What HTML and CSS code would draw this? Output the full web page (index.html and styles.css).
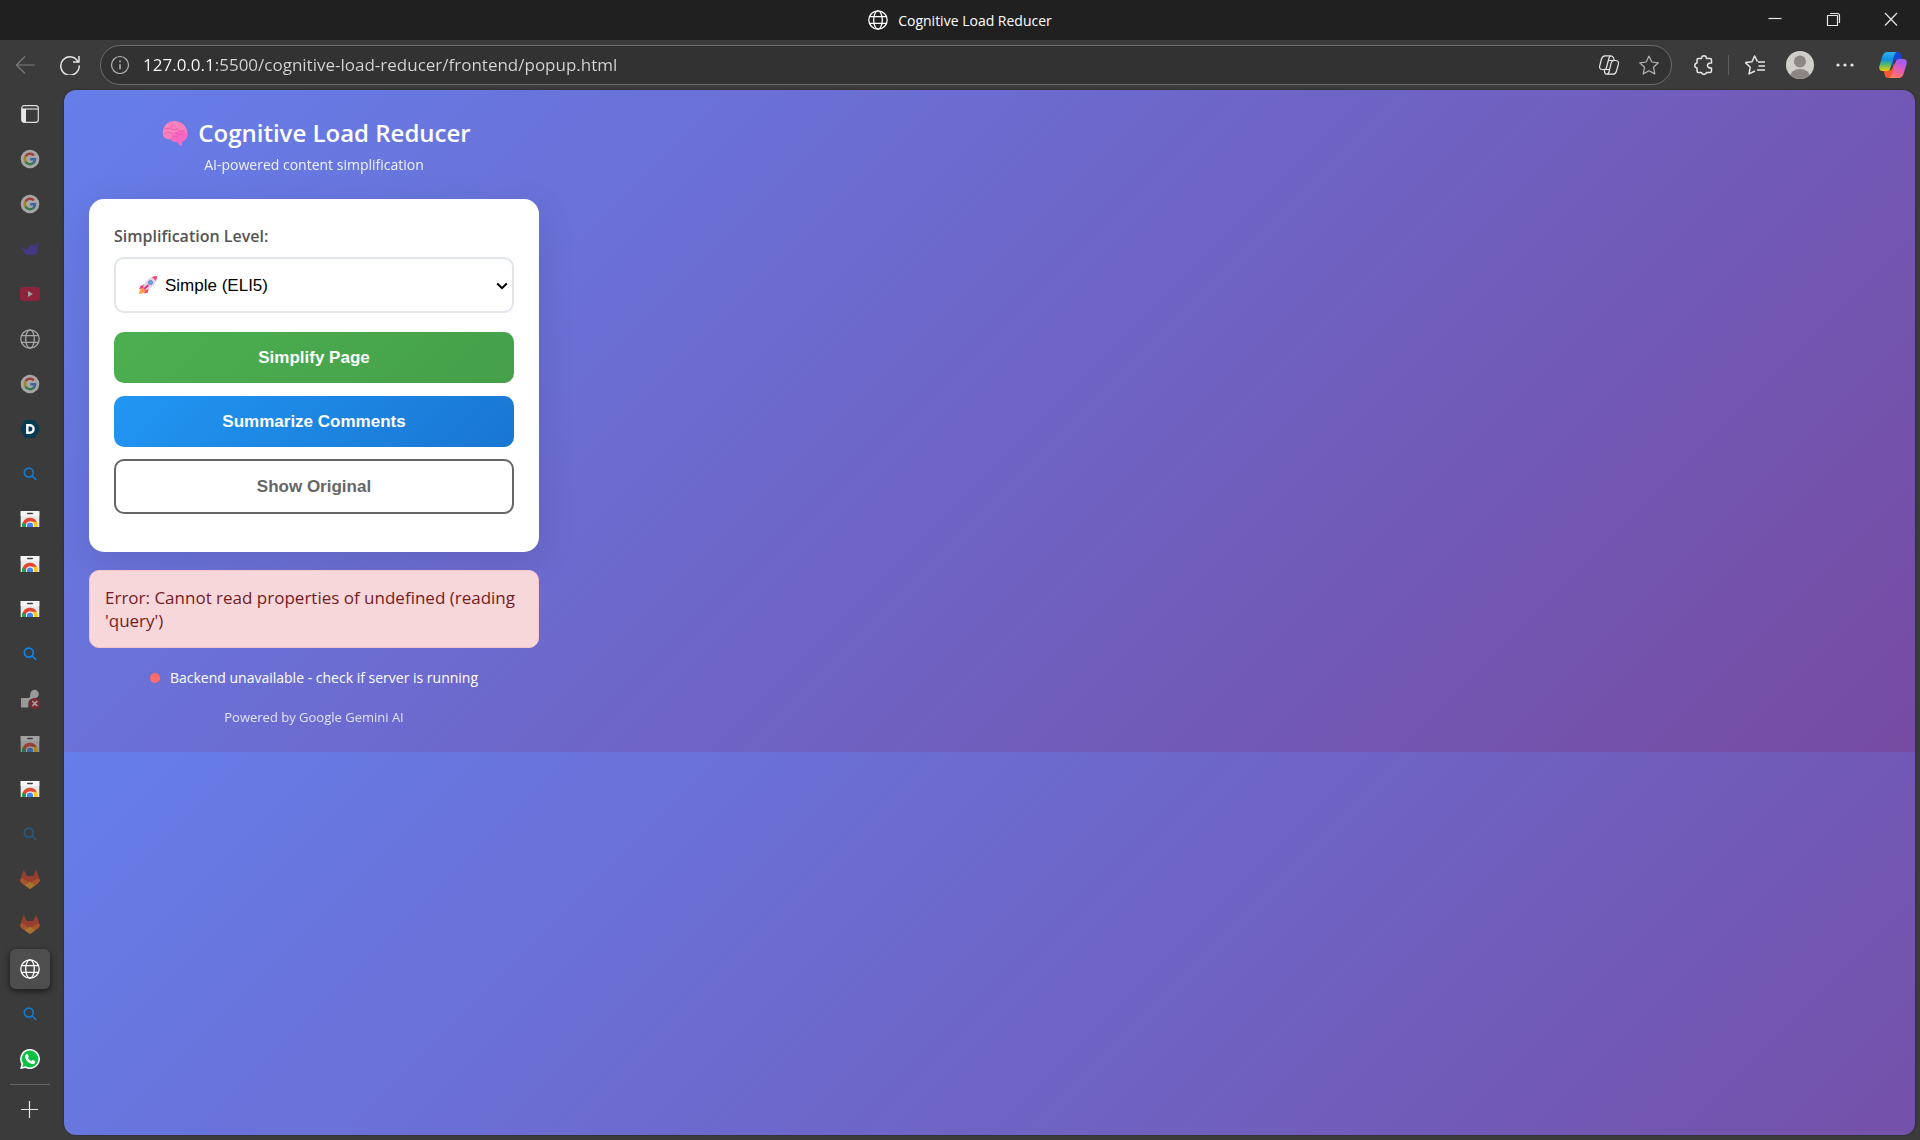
FILE: index.html
```html
<!DOCTYPE html>
<html lang="en">
<head>
    <meta charset="UTF-8">
    <meta name="viewport" content="width=device-width, initial-scale=1.0">
    <title>Cognitive Load Reducer</title>
    <link rel="stylesheet" href="styles.css">
</head>
<body>
    <!-- shared icons -->
    <svg class="sprite" aria-hidden="true">
        <symbol id="globe" viewBox="0 0 20 20">
            <g fill="none" stroke="currentColor" stroke-width="1.3">
                <circle cx="10" cy="10" r="9.2"/>
                <ellipse cx="10" cy="10" rx="4.3" ry="9.2"/>
                <path d="M1.6 6.6h16.8M1.6 13.4h16.8"/>
            </g>
        </symbol>
        <symbol id="google" viewBox="0 0 20 20">
            <circle cx="10" cy="10" r="9.3" fill="#fff"/>
            <g fill="none" stroke-width="2.4">
                <path d="M5.6 7.3A5.1 5.1 0 0 1 13.8 6.4" stroke="#ea4335"/>
                <path d="M5.6 12.7A5.3 5.3 0 0 1 5.6 7.3" stroke="#fbbc05"/>
                <path d="M13.5 13.8A5.1 5.1 0 0 1 5.5 12.6" stroke="#34a853"/>
                <path d="M10.2 10.2H15.1A5 5 0 0 1 13.3 14" stroke="#4285f4"/>
            </g>
        </symbol>
        <symbol id="search" viewBox="0 0 20 20">
            <g fill="none" stroke="#0a84e8" stroke-width="1.7" stroke-linecap="round">
                <circle cx="8.8" cy="8.6" r="4.5"/>
                <path d="M12.2 12l3.5 3.4"/>
            </g>
        </symbol>
        <symbol id="store" viewBox="0 0 20 20">
            <clipPath id="bag"><path d="M.7 2h18.6v16H.7z"/></clipPath>
            <path d="M.7 2h18.6v16H.7z" fill="#e9e9e9"/>
            <path d="M.7 2h18.6v5H.7z" fill="#f6f6f6"/>
            <rect x="7" y="3.8" width="6" height="1.5" rx=".7" fill="#3c3c3c"/>
            <g clip-path="url(#bag)">
                <circle cx="10" cy="16.6" r="7.8" fill="#fbc916"/>
                <path d="M10 16.6L3.2 12.7A7.8 7.8 0 0 0 6.1 23.4z" fill="#1e9d55"/>
                <path d="M3.2 12.7A7.8 7.8 0 0 1 16.8 12.7H10L6.6 18.6z" fill="#e2453a"/>
                <path d="M2.2 16.6a7.8 7.8 0 0 1 1-3.9L7 19H2.4z" fill="#1e9d55"/>
                <circle cx="10" cy="16.6" r="4" fill="#fff"/>
                <circle cx="10" cy="16.6" r="3.1" fill="#4285f4"/>
            </g>
        </symbol>
        <symbol id="gitlab" viewBox="0 0 20 20">
            <path d="M3.8.8L6.8 7h6.4l3-6.2L19.6 10a4 4 0 0 1-1.4 4.3L10 20l-8.2-5.7A4 4 0 0 1 .4 10z" fill="#e24329"/>
            <path d="M10 20l-8.2-5.7A4 4 0 0 1 .3 10.4L3 9.4l7 5 7-5 2.7 1a4 4 0 0 1-1.5 3.9z" fill="#fc6d26"/>
            <path d="M10 20l-5.3-3.8L10 12.4l5.3 3.8z" fill="#fca326"/>
        </symbol>
    </svg>

    <div class="browser">
        <header class="titlebar">
            <div class="window-title">
                <svg class="icon"><use href="#globe"/></svg>
                <span>Cognitive Load Reducer</span>
            </div>
            <div class="window-controls">
                <button type="button" aria-label="Minimize">
                    <svg class="icon" viewBox="0 0 20 20"><path d="M3.500 8.500h13"/></svg>
                </button>
                <button type="button" aria-label="Restore">
                    <svg class="icon" viewBox="0 0 20 20"><path d="M4.500 5.500h10v10h-10zM7 3.500h7.500a2 2 0 0 1 2 2V13"/></svg>
                </button>
                <button type="button" aria-label="Close">
                    <svg class="icon" viewBox="0 0 20 20"><path d="M4 3l12 12.500M16 3L4 15.500"/></svg>
                </button>
            </div>
        </header>

        <div class="toolbar">
            <button type="button" class="tool back" aria-label="Back">
                <svg class="icon" viewBox="0 0 20 20"><path d="M10 1.500L1.500 10l8.500 8.500M1.700 10h18"/></svg>
            </button>
            <button type="button" class="tool" aria-label="Refresh">
                <svg class="icon" viewBox="0 0 20 20"><path class="thick" d="M18.300 7A9.200 9.200 0 1 0 19.200 10.500M19 1v6h-6"/></svg>
            </button>
            <div class="address-bar">
                <svg class="icon info" viewBox="0 0 20 20">
                    <circle cx="10" cy="10" r="8.500"/>
                    <path class="thick" d="M10 9.200v5M10 5.600v1.600"/>
                </svg>
                <input type="text" class="url" aria-label="Address" value="127.0.0.1:5500/cognitive-load-reducer/frontend/popup.html">
                <button type="button" aria-label="Copilot in page">
                    <svg class="icon" viewBox="0 0 20 20">
                        <path d="M5.500 14.500H3.300C.8 14.500 .2 12.500 .8 10.500L2.500 4C3.100 2 4 .8 6 .8h6c1.600 0 2.200 1 2.600 2.400l.6 2.300h1.600c2.600 0 3 2 2.500 4L17.500 16c-.6 2-1.500 3.200-3.500 3.200H8c-1.600 0-2.200-1-2.500-2.400zM5.500 14.500c1.200 0 1.700-.8 2-2L10 3c.4-1.400.9-2.200 2-2.200M15.200 5.500c-1.500 0-2.600.8-3 2.200L10 17c-.3 1.200-.8 2.200-2 2.200M9.300 5.500h5.500M5.500 14.500h5"/>
                    </svg>
                </button>
                <button type="button" class="favorite" aria-label="Add to favorites">
                    <svg class="icon" viewBox="0 0 20 20"><path d="M10 1l2.800 6 6.500.8-4.800 4.500 1.300 6.600L10 15.700l-5.800 3.200 1.300-6.600L.7 7.800 7.200 7z"/></svg>
                </button>
            </div>
            <button type="button" class="tool" aria-label="Extensions">
                <svg class="icon" viewBox="0 0 20 20"><path class="thick" d="M4.500 3.500h3C7.700 1.600 8.800.8 10 .8s2.300.8 2.500 2.700H16q1.500 0 1.500 1.500v3c-2.400-.2-4 .7-4 2.500s1.600 2.700 4 2.500V16q0 1.500-1.500 1.500h-3.500C12.300 18.800 11.200 19.300 10 19.300s-2.300-.5-2.500-1.800h-3Q3 17.500 3 16v-3C1.500 12.700.8 11.800.8 10.500S1.500 8.300 3 8V5q0-1.500 1.500-1.500z"/></svg>
            </button>
            <span class="separator"></span>
            <button type="button" class="tool" aria-label="Favorites">
                <svg class="icon" viewBox="0 0 20 20"><path class="thick" d="M12.500 6.600L9.600 1 7 6.800.5 7.600l4.700 4.700-1.200 6.600 6-2.900M13 7h7M13.500 11h6.500M12 15h8"/></svg>
            </button>
            <button type="button" class="tool" aria-label="Profile">
                <svg class="avatar" viewBox="0 0 28 28">
                    <clipPath id="face"><circle cx="14" cy="14" r="14"/></clipPath>
                    <circle cx="14" cy="14" r="14" fill="#d0cecb"/>
                    <g clip-path="url(#face)" fill="#8a8784">
                        <circle cx="14" cy="10.500" r="6"/>
                        <ellipse cx="14" cy="26" rx="10" ry="8"/>
                    </g>
                </svg>
            </button>
            <button type="button" class="tool dots" aria-label="Settings and more">
                <svg class="icon" viewBox="0 0 20 20"><circle cx="3" cy="10" r="1.600"/><circle cx="10" cy="10" r="1.600"/><circle cx="17" cy="10" r="1.600"/></svg>
            </button>
            <button type="button" class="tool copilot" aria-label="Copilot">
                <svg class="avatar" viewBox="0 0 28 28">
                    <defs>
                        <linearGradient id="cool" x1="0" y1="0" x2="0" y2="1">
                            <stop offset="0" stop-color="#2bb5ee"/><stop offset=".4" stop-color="#1490df"/><stop offset=".65" stop-color="#4fb870"/><stop offset="1" stop-color="#f6cc0b"/>
                        </linearGradient>
                        <linearGradient id="warm" x1=".3" y1="0" x2="0" y2="1">
                            <stop offset="0" stop-color="#a45cf5"/><stop offset=".45" stop-color="#e25cb8"/><stop offset=".8" stop-color="#fb6f6d"/><stop offset="1" stop-color="#fca052"/>
                        </linearGradient>
                    </defs>
                    <path d="M13 1h6c2 0 2.800 1.500 3.200 3l1.300 4.500H18c-2 0-3 1.200-3.500 3L13 16 9.500 8z" fill="#1648d4"/>
                    <path d="M15 27H9c-2 0-2.800-1.500-3.200-3L4.500 19.500H10c2 0 3-1.200 3.500-3L15 12l3.500 8z" fill="#f25a35"/>
                    <path d="M8.500 1h9.300c-1.500.5-2 1.800-2.500 3.300l-4 13c-.5 1.700-1.300 2.700-3.300 2.700H3.500C.5 20-.2 17.500.4 15L3.500 5C4.200 2.700 5.500 1 8.500 1z" fill="url(#cool)"/>
                    <path d="M19.500 27h-9.300c1.500-.5 2-1.800 2.500-3.300l4-13c.5-1.700 1.300-2.700 3.300-2.700h4.500c3 0 3.700 2.500 3.100 5l-3.100 10c-.7 2.300-2 4-5 4z" fill="url(#warm)"/>
                </svg>
            </button>
        </div>

        <div class="workspace">
            <nav class="tabs" aria-label="Tabs">
                <button type="button" aria-label="Tab actions">
                    <svg class="icon" viewBox="0 0 20 20"><rect x="1.700" y="1.700" width="16.600" height="16.600" rx="2.500" fill="none" stroke="#ddd" stroke-width="1.200"/><path d="M1.700 5h16.600" stroke="#ddd" stroke-width="1.200"/><path d="M1.700 5H6v13.300H4a2.300 2.300 0 0 1-2.300-2.300z" fill="#e8e8e8"/></svg>
                </button>
                <button type="button" class="asleep" aria-label="Google"><svg class="icon"><use href="#google"/></svg></button>
                <button type="button" class="asleep" aria-label="Google"><svg class="icon"><use href="#google"/></svg></button>
                <button type="button" class="asleep" aria-label="Whale">
                    <svg class="icon" viewBox="0 0 20 20"><path d="M1 8.500c1.500-1 3 .2 4.200 1.500 1.300 1.400 2 .8 2.800-.7C9.200 7 11.500 5.700 14 6.600l1.500-.1c-.2-1.400.8-2 2.200-2.100L19.300 4c-.2 1.800-1 2.700-2.200 3.500.6 1.200.8 2.700.5 4.200-.5 2.500-2 4.300-4.200 4.300H8.500C5.500 16 4 13.500 3.200 11.500 2.700 10.200 2 9.500 1 8.500z" fill="#5034c0"/></svg>
                </button>
                <button type="button" class="asleep" aria-label="YouTube">
                    <svg class="icon" viewBox="0 0 20 20"><rect y="3" width="20" height="14" rx="3.500" fill="#d2103c"/><path d="M8 7l5 3-5 3z" fill="#eee"/></svg>
                </button>
                <button type="button" class="asleep" aria-label="Local page"><svg class="icon"><use href="#globe"/></svg></button>
                <button type="button" class="asleep" aria-label="Google"><svg class="icon"><use href="#google"/></svg></button>
                <button type="button" aria-label="Devfolio">
                    <svg class="icon" viewBox="0 0 20 20"><path d="M6 1h8l1.500 1 4 7v2l-4 7-1.500 1H6l-1.500-1-4-7V9l4-7z" fill="#063b52"/><path d="M7.300 6.200h2.500a3.800 3.800 0 0 1 0 7.600H7.300z" fill="none" stroke="#fff" stroke-width="2.400"/></svg>
                </button>
                <button type="button" class="dim" aria-label="Search"><svg class="icon"><use href="#search"/></svg></button>
                <button type="button" aria-label="Web Store"><svg class="icon"><use href="#store"/></svg></button>
                <button type="button" aria-label="Web Store"><svg class="icon"><use href="#store"/></svg></button>
                <button type="button" aria-label="Web Store"><svg class="icon"><use href="#store"/></svg></button>
                <button type="button" aria-label="Search"><svg class="icon"><use href="#search"/></svg></button>
                <button type="button" class="asleep" aria-label="Extension error">
                    <svg class="icon" viewBox="0 0 20 20"><path d="M1 9h7.500c2 0 1.300-3 2-5a4.200 4.200 0 1 1 6 4.800C14 9.800 10 9 8.500 13l-.3 5.500H1z" fill="#e6e6e6"/><circle cx="14.800" cy="14.500" r="5.500" fill="#b0192c"/><path d="M12.300 12l5 5M17.300 12l-5 5" stroke="#fff" stroke-width="1.700"/></svg>
                </button>
                <button type="button" class="asleep" aria-label="Web Store"><svg class="icon"><use href="#store"/></svg></button>
                <button type="button" aria-label="Web Store"><svg class="icon"><use href="#store"/></svg></button>
                <button type="button" class="faded" aria-label="Search"><svg class="icon"><use href="#search"/></svg></button>
                <button type="button" class="asleep" aria-label="GitLab"><svg class="icon"><use href="#gitlab"/></svg></button>
                <button type="button" class="asleep" aria-label="GitLab"><svg class="icon"><use href="#gitlab"/></svg></button>
                <button type="button" class="active" aria-label="Cognitive Load Reducer"><svg class="icon"><use href="#globe"/></svg></button>
                <button type="button" class="dim" aria-label="Search"><svg class="icon"><use href="#search"/></svg></button>
                <button type="button" aria-label="WhatsApp">
                    <svg class="icon" viewBox="0 0 20 20"><path d="M10 0a10 10 0 1 1-4.600 18.900L.2 20l1.200-5A10 10 0 0 1 10 0z" fill="#fff"/><path d="M10 1.600a8.400 8.400 0 1 1-4.200 15.700l-3.400.8.800-3.300A8.400 8.400 0 0 1 10 1.600z" fill="#0bc143"/><path d="M6.200 5.200c.8-.6 1.500-.3 1.800.5l.6 1.500c.2.700-.7 1.200-.8 1.600.7 1.500 2 2.700 3.600 3.400.6-.3 1-1.300 1.700-1.100l1.700.9c.8.400.5 1.300.1 1.900-.8 1.100-2.300 1.200-3.600.8C8.300 13.700 6 11.600 5.200 8.800c-.4-1.400-.1-2.700 1-3.600z" fill="#fff"/></svg>
                </button>
                <hr>
                <button type="button" aria-label="New tab">
                    <svg class="icon" viewBox="0 0 20 20"><path d="M1 9.500h17M9.500 1v17" stroke="#e8e8e8" stroke-width="1.200"/></svg>
                </button>
            </nav>

            <main class="page">
                <div class="container">
                    <div class="header">
                        <h1>
                            <svg class="brain" viewBox="0 0 26 26" aria-hidden="true">
                                <path d="M13 1C8 .8 4 3.300 2 7.500.5 10.500.3 14 1.500 16.500c1.500 2.500 4.500 3.300 7.500 2.500 1 2 3.500 3 6 2.800l3.500 3.700 1.500-.3v-3.700c3-.5 5.300-3.500 5.400-7C25.800 7.500 20.500 1.300 13 1z" fill="#fb80be"/>
                                <path d="M14 12c4-2 9-1.500 11 2-.2 4-2.500 7-5.200 7.500v3.700l-1.500.3-3.300-3.700c-3 0-5-.8-6-2.800 1-3.800 2-5.500 5-7z" fill="#f968c4"/>
                                <path d="M3.500 8.500c3.500.5 6-.5 7-3.500M8.500 7.500c1 2.500 4.500 2.800 6.500 1 1.500 3 5 3.500 7.500 1.500M2.500 14c2.500-2.500 6-2 8.500.5M13.500 12.500c1.500 2.500 5 2.500 7.500 1M9 19c1.500-3 5-3.500 7.500-1.500" fill="none" stroke="#e45fa0" stroke-width="1" stroke-linecap="round"/>
                            </svg>
                            Cognitive Load Reducer
                        </h1>
                        <p>AI-powered content simplification</p>
                    </div>

                    <form class="card">
                        <label for="level">Simplification Level:</label>
                        <div class="select-wrap">
                            <svg class="rocket" viewBox="0 0 18 18" aria-hidden="true">
                                <path d="M6 8L1.500 10 0 13.500l5-1.500zM10 12l-1.500 4.800L5 17.500l1.500-5z" fill="#f0437c"/>
                                <path d="M4.500 11.500L7 14c-1 2.500-3.500 3.500-7 4 .3-3.500 2-6 4.500-6.500z" fill="#fb9b45"/>
                                <path d="M4 11c1.500-5 5-9 11-10.500L17.500 3C16 9 12 12.500 7 14z" fill="#dcd3e6"/>
                                <path d="M13 1c1.500-.7 3.300-1 5-1 0 1.700-.3 3.500-1 5z" fill="#f34a6c"/>
                                <circle cx="11.500" cy="6.500" r="2" fill="#58b5f2" stroke="#6a6cc0" stroke-width=".8"/>
                                <path d="M5.500 12.500l3.500-3" stroke="#d6357c" stroke-width="1.800" stroke-linecap="round"/>
                            </svg>
                            <select id="level">
                                <option>Simple (ELI5)</option>
                            </select>
                            <svg class="chevron" viewBox="0 0 12 8" aria-hidden="true"><path d="M1.200 1.500L6 6.200l4.800-4.700"/></svg>
                        </div>
                        <button type="button" class="btn btn-primary">Simplify Page</button>
                        <button type="button" class="btn btn-secondary">Summarize Comments</button>
                        <button type="button" class="btn btn-outline">Show Original</button>
                    </form>

                    <div class="status error" role="alert">Error: Cannot read properties of undefined (reading 'query')</div>

                    <div class="backend"><span class="dot"></span>Backend unavailable - check if server is running</div>
                    <footer>Powered by Google Gemini AI</footer>
                </div>
            </main>
        </div>
    </div>
</body>
</html>
```
FILE: styles.css
```css
* {
    box-sizing: border-box;
}

body {
    margin: 0;
    font-family: 'Segoe UI', 'Open Sans', 'Noto Sans', sans-serif;
    background-color: #3b3b3b;
    color: white;
}

button {
    font-family: inherit;
    padding: 0;
    border: none;
    background: none;
    color: inherit;
    cursor: pointer;
}

.sprite {
    position: absolute;
    width: 0;
    height: 0;
}

.icon {
    display: block;
    width: 20px;
    height: 20px;
}

.browser {
    display: flex;
    flex-direction: column;
    min-height: 100vh;
}

/* Title bar */
.titlebar {
    display: grid;
    grid-template-columns: 1fr auto 1fr;
    align-items: center;
    height: 40px;
    background-color: #202020;
}

.window-title {
    grid-column: 2;
    display: flex;
    align-items: center;
    gap: 10px;
    font-size: 14px;
}

.window-controls {
    display: flex;
    justify-content: flex-end;
}

.window-controls button {
    display: grid;
    place-items: center;
    width: 58px;
    height: 40px;
}

.window-controls path,
.toolbar .icon {
    fill: none;
    stroke: #e6e6e6;
    stroke-width: 1.2;
    stroke-linejoin: round;
}

/* Toolbar */
.toolbar {
    display: flex;
    align-items: center;
    height: 50px;
    padding: 0 5px 0 2px;
}

.toolbar .thick {
    stroke-width: 1.5;
}

.tool {
    display: grid;
    place-items: center;
    width: 45px;
    height: 40px;
}

.toolbar .back .icon {
    stroke: #7c7c7c;
}

.toolbar .dots .icon {
    fill: #e6e6e6;
    stroke: none;
}

.copilot {
    margin-left: 3px;
}

.avatar {
    display: block;
    width: 28px;
    height: 28px;
}

.address-bar {
    flex: 1;
    display: flex;
    align-items: center;
    height: 40px;
    margin: 0 9px 0 8px;
    padding: 0 2px 0 9px;
    border: 1px solid #6c6c6c;
    border-radius: 20px;
    background-color: #323232;
}

.address-bar button {
    display: grid;
    place-items: center;
    width: 40px;
    height: 36px;
}

.toolbar .info,
.toolbar .favorite .icon {
    stroke: #b4b4b4;
}

.url {
    flex: 1;
    margin-left: 13px;
    padding: 0 0 2px;
    border: none;
    outline: none;
    font-family: inherit;
    font-size: 17px;
    background: linear-gradient(to right, #fff 70px, #d6d6d6 70px);
    background-clip: text;
    color: transparent;
}

.separator {
    width: 1px;
    height: 20px;
    margin: 0 3px 0 2px;
    background-color: #5c5c5c;
}

/* Vertical tabs */
.workspace {
    flex: 1;
    display: flex;
    padding: 0 5px 5px 0;
}

.tabs {
    display: flex;
    flex-direction: column;
    gap: 5px;
    width: 64px;
    padding: 4px 0 0 10px;
}

.tabs button {
    display: grid;
    place-items: center;
    width: 40px;
    height: 40px;
    border-radius: 6px;
}

.tabs .asleep .icon {
    opacity: 0.55;
}

.tabs .dim .icon {
    opacity: 0.85;
}

.tabs .faded .icon {
    opacity: 0.4;
}

.tabs .active {
    background-color: #4e4e4e;
    box-shadow: 0 2px 6px rgba(0, 0, 0, 0.6);
}

.tabs hr {
    width: 40px;
    height: 1px;
    margin: 0;
    border: none;
    background-color: #646464;
}

/* Page */
.page {
    flex: 1;
    border-radius: 12px;
    background: linear-gradient(135deg, #667eea 0%, #764ba2 100%) 0 0 / 100% 662px;
    box-shadow: 0 0 2px rgba(0, 0, 0, 0.5);
}

.container {
    width: 500px;
    padding: 25px;
}

.header {
    margin-bottom: 25px;
    text-align: center;
}

.header h1 {
    display: flex;
    align-items: center;
    justify-content: center;
    gap: 10px;
    margin: 0 0 5px;
    padding-left: 5px;
    font-size: 24px;
    font-weight: 600;
    line-height: 35px;
}

.brain {
    width: 26px;
    height: 26px;
}

.header p {
    margin: 0;
    font-size: 14px;
    line-height: 19px;
    opacity: 0.9;
}

.card {
    margin-bottom: 18px;
    padding: 25px 25px 38px;
    border-radius: 15px;
    background-color: white;
    box-shadow: 0 10px 38px rgba(0, 0, 0, 0.1);
}

.card label {
    display: block;
    margin-bottom: 8px;
    font-size: 16px;
    font-weight: 600;
    line-height: 25px;
    color: #555;
}

.select-wrap {
    position: relative;
    margin-bottom: 19px;
}

.select-wrap select {
    display: block;
    width: 100%;
    height: 56px;
    padding: 0 30px 0 49px;
    border: 2px solid #e1e5e9;
    border-radius: 10px;
    appearance: none;
    background-color: white;
    color: black;
    font-family: 'Liberation Sans', Arial, sans-serif;
    font-size: 17px;
}

.rocket {
    position: absolute;
    top: 19px;
    left: 25px;
    width: 18px;
    height: 18px;
}

.chevron {
    position: absolute;
    top: 25px;
    right: 6px;
    width: 12px;
    height: 8px;
    fill: none;
    stroke: black;
    stroke-width: 2;
    pointer-events: none;
}

.btn {
    display: block;
    width: 100%;
    height: 51px;
    margin-bottom: 13px;
    border-radius: 10px;
    font-family: 'Liberation Sans', Arial, sans-serif;
    font-size: 17px;
    font-weight: 600;
    color: white;
}

.btn-primary {
    background: linear-gradient(135deg, #4caf50, #45a049);
}

.btn-secondary {
    margin-bottom: 12px;
    background: linear-gradient(135deg, #2196f3, #1976d2);
}

.btn-outline {
    height: 55px;
    margin-bottom: 0;
    border: 2px solid #666;
    color: #666;
}

.status {
    margin-bottom: 18px;
    padding: 15px;
    border: 1px solid #f5c6cb;
    border-radius: 10px;
    font-size: 17px;
    line-height: 23px;
}

.error {
    background-color: #f8d7da;
    color: #721c24;
}

.backend {
    display: flex;
    align-items: center;
    justify-content: center;
    gap: 10px;
    font-size: 14px;
    line-height: 24px;
}

.dot {
    width: 10px;
    height: 10px;
    border-radius: 50%;
    background-color: #ff6b6b;
}

footer {
    margin-top: 18px;
    text-align: center;
    font-size: 13px;
    line-height: 18px;
    opacity: 0.8;
}
```
